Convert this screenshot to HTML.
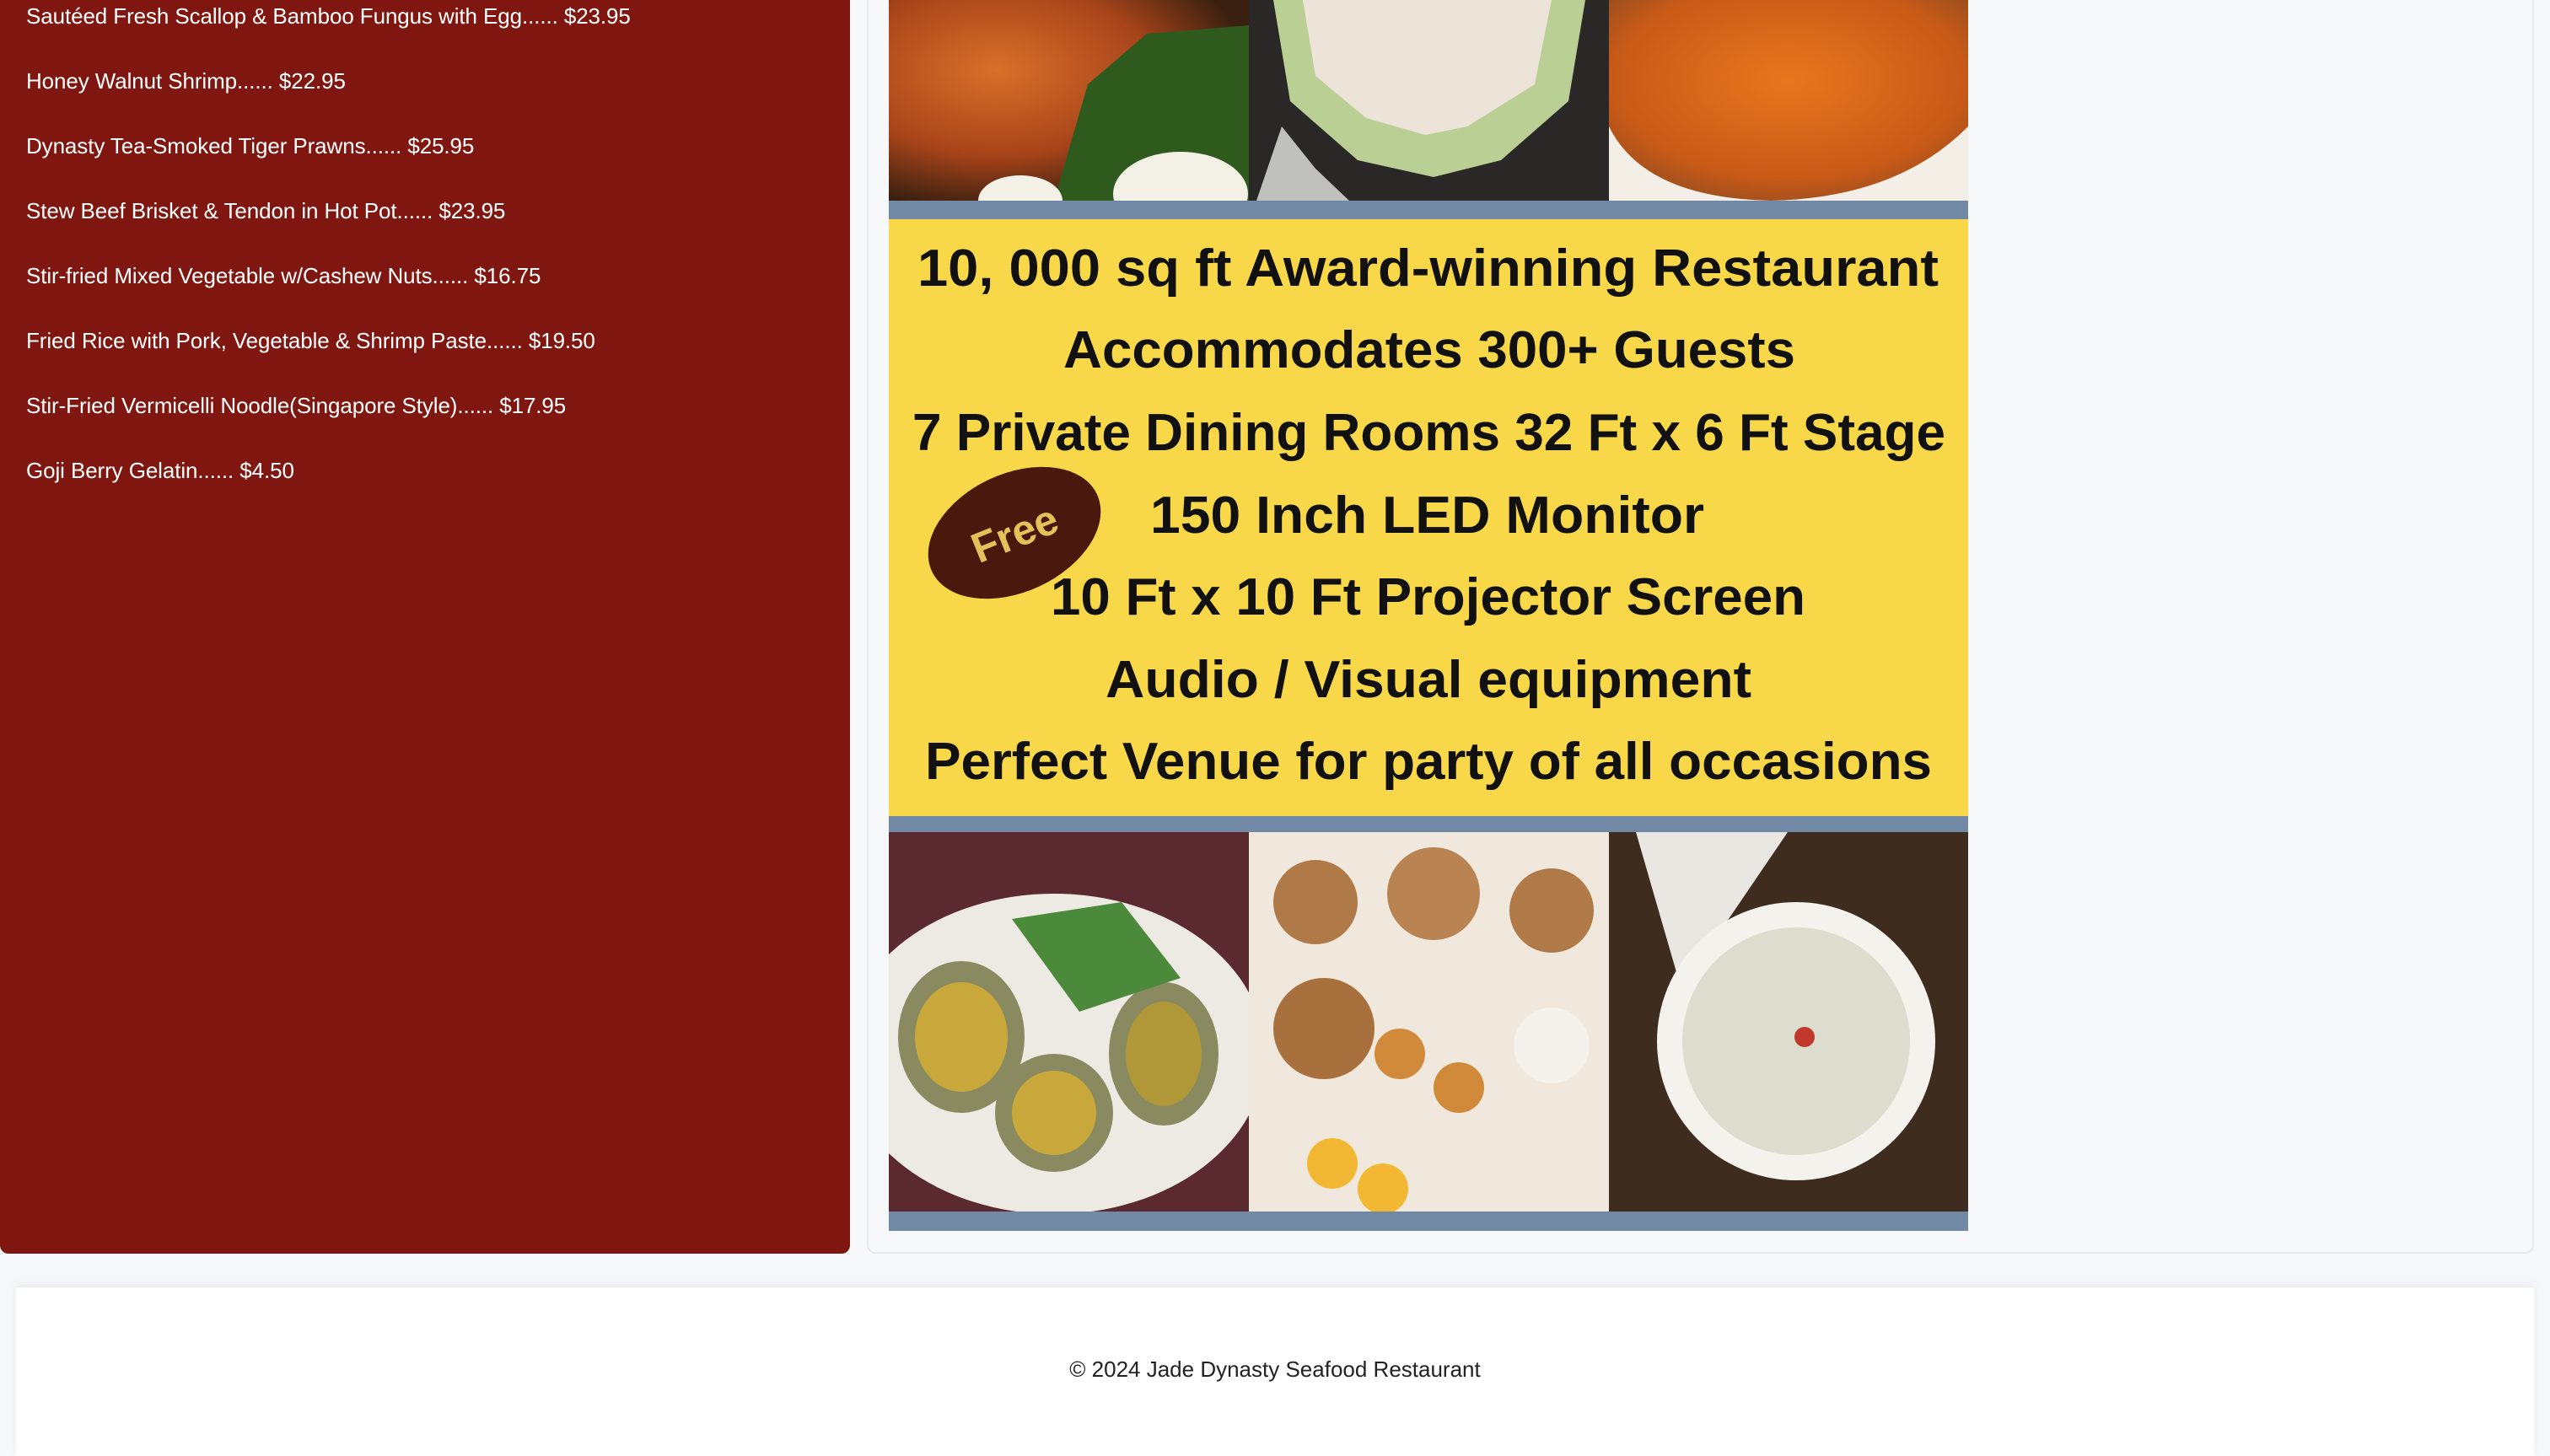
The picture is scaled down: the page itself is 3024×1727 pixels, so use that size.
<!DOCTYPE html>
<html><head><meta charset="utf-8"><style>
*{margin:0;padding:0;box-sizing:border-box}
body{width:3024px;height:1714px;background:#f7f8fa;position:relative;overflow:hidden;font-family:"Liberation Sans",sans-serif}
#left{position:absolute;left:0;top:0;width:1008px;height:1487px;background:#7f1710;border-bottom-right-radius:10px;border-bottom-left-radius:10px}
#left p{position:absolute;left:31px;color:#fff;font-size:26px;line-height:30px;letter-spacing:-0.1px}
#card{position:absolute;left:1028px;top:-20px;width:1977px;height:1507px;background:#f7f8fa;border:2px solid #e8e9ec;border-radius:10px}
#foot{position:absolute;left:19px;top:1527px;width:2986px;height:200px;background:#fff;box-shadow:0 -4px 10px rgba(0,0,0,.06)}
svg{position:absolute;left:0;top:0}
</style></head><body>
<div id="left">
<p style="top:4px">Sautéed Fresh Scallop &amp; Bamboo Fungus with Egg...... $23.95</p>
<p style="top:81px">Honey Walnut Shrimp...... $22.95</p>
<p style="top:158px">Dynasty Tea-Smoked Tiger Prawns...... $25.95</p>
<p style="top:235px">Stew Beef Brisket &amp; Tendon in Hot Pot...... $23.95</p>
<p style="top:312px">Stir-fried Mixed Vegetable w/Cashew Nuts...... $16.75</p>
<p style="top:389px">Fried Rice with Pork, Vegetable &amp; Shrimp Paste...... $19.50</p>
<p style="top:466px">Stir-Fried Vermicelli Noodle(Singapore Style)...... $17.95</p>
<p style="top:543px">Goji Berry Gelatin...... $4.50</p>
</div>
<div id="card"></div>
<div id="foot"></div>
<div style="position:absolute;left:0;top:1609px;width:3024px;text-align:center;font-size:26px;color:#222">© 2024 Jade Dynasty Seafood Restaurant</div>
<svg width="3024" height="1714" viewBox="0 0 3024 1714">
<defs>
<radialGradient id="duck" cx=".3" cy=".35" r=".7"><stop offset="0" stop-color="#d8702a"/><stop offset=".6" stop-color="#a8441a"/><stop offset="1" stop-color="#3a2010"/></radialGradient>
<radialGradient id="crab" cx=".5" cy=".4" r=".7"><stop offset="0" stop-color="#e8761e"/><stop offset=".7" stop-color="#c85a18"/><stop offset="1" stop-color="#8a4a20"/></radialGradient>
<clipPath id="c1"><rect x="1054" y="0" width="427" height="238"/></clipPath>
<clipPath id="c2"><rect x="1481" y="0" width="427" height="238"/></clipPath>
<clipPath id="c3"><rect x="1908" y="0" width="426" height="238"/></clipPath>
<clipPath id="d1"><rect x="1054" y="987" width="427" height="450"/></clipPath>
<clipPath id="d2"><rect x="1481" y="987" width="427" height="450"/></clipPath>
<clipPath id="d3"><rect x="1908" y="987" width="426" height="450"/></clipPath>
</defs>
<g clip-path="url(#c1)">
<rect x="1054" y="0" width="427" height="238" fill="url(#duck)"/>
<path d="M1250 238 L1290 100 L1360 40 L1481 30 L1481 238Z" fill="#2f5a1e"/>
<ellipse cx="1210" cy="238" rx="50" ry="30" fill="#f3f0e6"/>
<ellipse cx="1400" cy="230" rx="80" ry="50" fill="#f3f0e6"/>
</g>
<g clip-path="url(#c2)">
<rect x="1481" y="0" width="427" height="238" fill="#2a2826"/>
<path d="M1510 0 L1880 0 L1860 120 L1780 190 L1700 210 L1610 190 L1530 120Z" fill="#b9cf94"/>
<path d="M1545 0 L1840 0 L1820 100 L1740 150 L1690 160 L1620 140 L1560 90Z" fill="#ece4d8"/>
<path d="M1490 238 L1520 150 L1560 200 L1600 238Z" fill="#c0c0bc"/>
</g>
<g clip-path="url(#c3)">
<rect x="1908" y="0" width="426" height="238" fill="url(#crab)"/>
<path d="M1908 150 Q1950 235 2100 238 Q2250 235 2334 150 L2334 238 L1908 238Z" fill="#f3efe6"/>
</g>
<rect x="1054" y="238" width="1280" height="22" fill="#7189a5"/>
<rect x="1054" y="260" width="1280" height="708" fill="#f8d748"/>
<g font-family="'Liberation Sans',sans-serif" font-weight="bold" font-size="62" fill="#111">
<text x="1088" y="339" textLength="1211" lengthAdjust="spacingAndGlyphs">10, 000 sq ft Award-winning Restaurant</text>
<text x="1261" y="436" textLength="868" lengthAdjust="spacingAndGlyphs">Accommodates 300+ Guests</text>
<text x="1082" y="534" textLength="1225" lengthAdjust="spacingAndGlyphs">7 Private Dining Rooms 32 Ft x 6 Ft Stage</text>
<text x="1364" y="632" textLength="657" lengthAdjust="spacingAndGlyphs">150 Inch LED Monitor</text>
<text x="1246" y="729" textLength="895" lengthAdjust="spacingAndGlyphs">10 Ft x 10 Ft Projector Screen</text>
<text x="1311" y="827" textLength="766" lengthAdjust="spacingAndGlyphs">Audio / Visual equipment</text>
<text x="1097" y="924" textLength="1194" lengthAdjust="spacingAndGlyphs">Perfect Venue for party of all occasions</text>
</g>
<ellipse cx="1203" cy="632" rx="108" ry="70" transform="rotate(-25 1203 632)" fill="#4a180c"/>
<text x="1203" y="650" transform="rotate(-22 1203 632)" text-anchor="middle" font-family="'Liberation Sans',sans-serif" font-weight="bold" font-size="50" fill="#e6c15a">Free</text>
<rect x="1054" y="968" width="1280" height="19" fill="#7189a5"/>
<g clip-path="url(#d1)">
<rect x="1054" y="987" width="427" height="450" fill="#5a2a30"/>
<ellipse cx="1250" cy="1250" rx="250" ry="190" fill="#eceae2"/>
<ellipse cx="1140" cy="1230" rx="75" ry="90" fill="#8a8a60"/>
<ellipse cx="1140" cy="1230" rx="55" ry="65" fill="#c8a83a"/>
<ellipse cx="1250" cy="1320" rx="70" ry="70" fill="#8a8a60"/>
<ellipse cx="1250" cy="1320" rx="50" ry="50" fill="#c8a83a"/>
<ellipse cx="1380" cy="1250" rx="65" ry="85" fill="#8a8a60"/>
<ellipse cx="1380" cy="1250" rx="45" ry="62" fill="#b09838"/>
<path d="M1200 1090 L1330 1070 L1400 1160 L1280 1200Z" fill="#4a8a3a"/>
</g>
<g clip-path="url(#d2)">
<rect x="1481" y="987" width="427" height="450" fill="#f0e8dc"/>
<circle cx="1560" cy="1070" r="50" fill="#b07a48"/><circle cx="1700" cy="1060" r="55" fill="#b98452"/><circle cx="1840" cy="1080" r="50" fill="#b07a48"/>
<circle cx="1570" cy="1220" r="60" fill="#a8703c"/><circle cx="1660" cy="1250" r="30" fill="#d08a3a"/><circle cx="1730" cy="1290" r="30" fill="#d08a3a"/>
<circle cx="1840" cy="1240" r="45" fill="#f4f0ea"/>
<circle cx="1580" cy="1380" r="30" fill="#f2b833"/><circle cx="1640" cy="1410" r="30" fill="#f2b833"/>
</g>
<g clip-path="url(#d3)">
<rect x="1908" y="987" width="426" height="450" fill="#3e2c1e"/>
<path d="M1940 987 L2120 987 L2050 1090 L1990 1160Z" fill="#e9e7e2"/>
<circle cx="2130" cy="1235" r="165" fill="#f4f2ec"/>
<circle cx="2130" cy="1235" r="135" fill="#dcdccf"/>
<circle cx="2140" cy="1230" r="12" fill="#c0392b"/>
</g>
<rect x="1054" y="1437" width="1280" height="23" fill="#7189a5"/>
</svg>
</body></html>
